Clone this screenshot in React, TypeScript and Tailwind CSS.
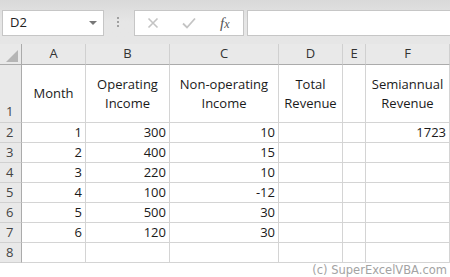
import React from "react";

const cols = [
  { key: "A", w: "w-[64px]" },
  { key: "B", w: "w-[84px]" },
  { key: "C", w: "w-[109px]" },
  { key: "D", w: "w-[64px]" },
  { key: "E", w: "w-[23px]" },
  { key: "F", w: "flex-1" },
];

const headers = ["Month", "Operating Income", "Non-operating Income", "Total Revenue", "", "Semiannual Revenue"];

const rows: (string | number)[][] = [
  [1, 300, 10, "", "", 1723],
  [2, 400, 15, "", "", ""],
  [3, 220, 10, "", "", ""],
  [4, 100, -12, "", "", ""],
  [5, 500, 30, "", "", ""],
  [6, 120, 30, "", "", ""],
  ["", "", "", "", "", ""],
];

const font = { fontFamily: '"Open Sans", sans-serif' };

function RowHead({ n, tall }: { n: number; tall?: boolean }) {
  return (
    <div
      className={`flex w-[22px] shrink-0 border-r border-b border-r-[#ababab] border-b-[#d0d0d0] bg-[#e9e9e9] pl-[6px] text-[#444] ${
        tall ? "items-end pb-[1px]" : "items-center"
      }`}
    >
      {n}
    </div>
  );
}

export default function App() {
  return (
    <div className="h-[277px] w-[450px] overflow-hidden bg-white text-[13px]" style={font}>
      {/* Formula bar */}
      <div className="flex h-[44px] items-start bg-gradient-to-b from-[#d9d9d9] via-[#e6e6e6] to-[#e6e6e6] pt-[10px]">
        <div className="ml-[2px] flex h-[26px] w-[102px] items-center justify-between border border-[#c6c6c6] bg-white pl-[7px] pr-[6px] text-[#222]">
          <span>D2</span>
          <svg width="8" height="5" viewBox="0 0 8 5">
            <path d="M0 0h8L4 4z" fill="#777" />
          </svg>
        </div>
        <div className="flex w-[30px] flex-col items-center gap-[2px] pt-[7px] pr-[2px]">
          <span className="h-[2px] w-[2px] bg-[#a0a0a0]" />
          <span className="h-[2px] w-[2px] bg-[#a0a0a0]" />
          <span className="h-[2px] w-[2px] bg-[#a0a0a0]" />
        </div>
        <div className="flex h-[26px] w-[110px] items-center border border-[#c6c6c6] bg-white">
          <svg width="12" height="12" viewBox="0 0 12 12" className="ml-[12px]">
            <path d="M1.5 1.5l9 9M10.5 1.5l-9 9" stroke="#c4c4c4" strokeWidth="1.6" />
          </svg>
          <svg width="14" height="12" viewBox="0 0 14 12" className="ml-[23px]">
            <path d="M1 6.5l4 4L13 1.5" stroke="#c4c4c4" strokeWidth="1.8" fill="none" />
          </svg>
          <span
            className="ml-[24px] text-[15px] italic text-[#555]"
            style={{ fontFamily: '"Liberation Serif", serif' }}
          >
            f<span className="text-[12px]">x</span>
          </span>
        </div>
        <div className="ml-[3px] h-[26px] flex-1 border border-r-0 border-[#c6c6c6] bg-white" />
      </div>

      {/* Column headers */}
      <div className="flex h-[21px] bg-[#e9e9e9] text-[#333]">
        <div className="relative w-[22px] shrink-0 border-r border-b border-[#ababab]">
          <svg width="12" height="12" viewBox="0 0 12 12" className="absolute right-[3px] bottom-[2px]">
            <path d="M12 0v12H0z" fill="#b5b5b5" />
          </svg>
        </div>
        {cols.map((c) => (
          <div
            key={c.key}
            className={`${c.w} flex shrink-0 items-center justify-center border-r border-b border-r-[#d0d0d0] border-b-[#ababab]`}
          >
            {c.key}
          </div>
        ))}
      </div>

      {/* Row 1 */}
      <div className="flex h-[58px] text-[#1a1a1a]">
        <RowHead n={1} tall />
        {cols.map((c, i) => (
          <div
            key={c.key}
            className={`${c.w} flex shrink-0 items-center justify-center border-r border-b border-[#d4d4d4] px-[2px] text-center leading-[19px]`}
          >
            {headers[i]}
          </div>
        ))}
      </div>

      {/* Data rows */}
      {rows.map((r, ri) => (
        <div key={ri} className="flex h-[20px] text-[#1a1a1a]">
          <RowHead n={ri + 2} />
          {cols.map((c, i) => (
            <div
              key={c.key}
              className={`${c.w} flex shrink-0 items-center justify-end border-r border-b border-[#d4d4d4] pr-[3px]`}
            >
              {r[i]}
            </div>
          ))}
        </div>
      ))}

      <div
        className="flex h-[14px] justify-end pr-[3px] text-[11.5px] leading-[14px] text-[#a3a3a3]"
        style={{ fontFamily: '"DejaVu Sans", sans-serif' }}
      >
        (c) SuperExcelVBA.com
      </div>
    </div>
  );
}
